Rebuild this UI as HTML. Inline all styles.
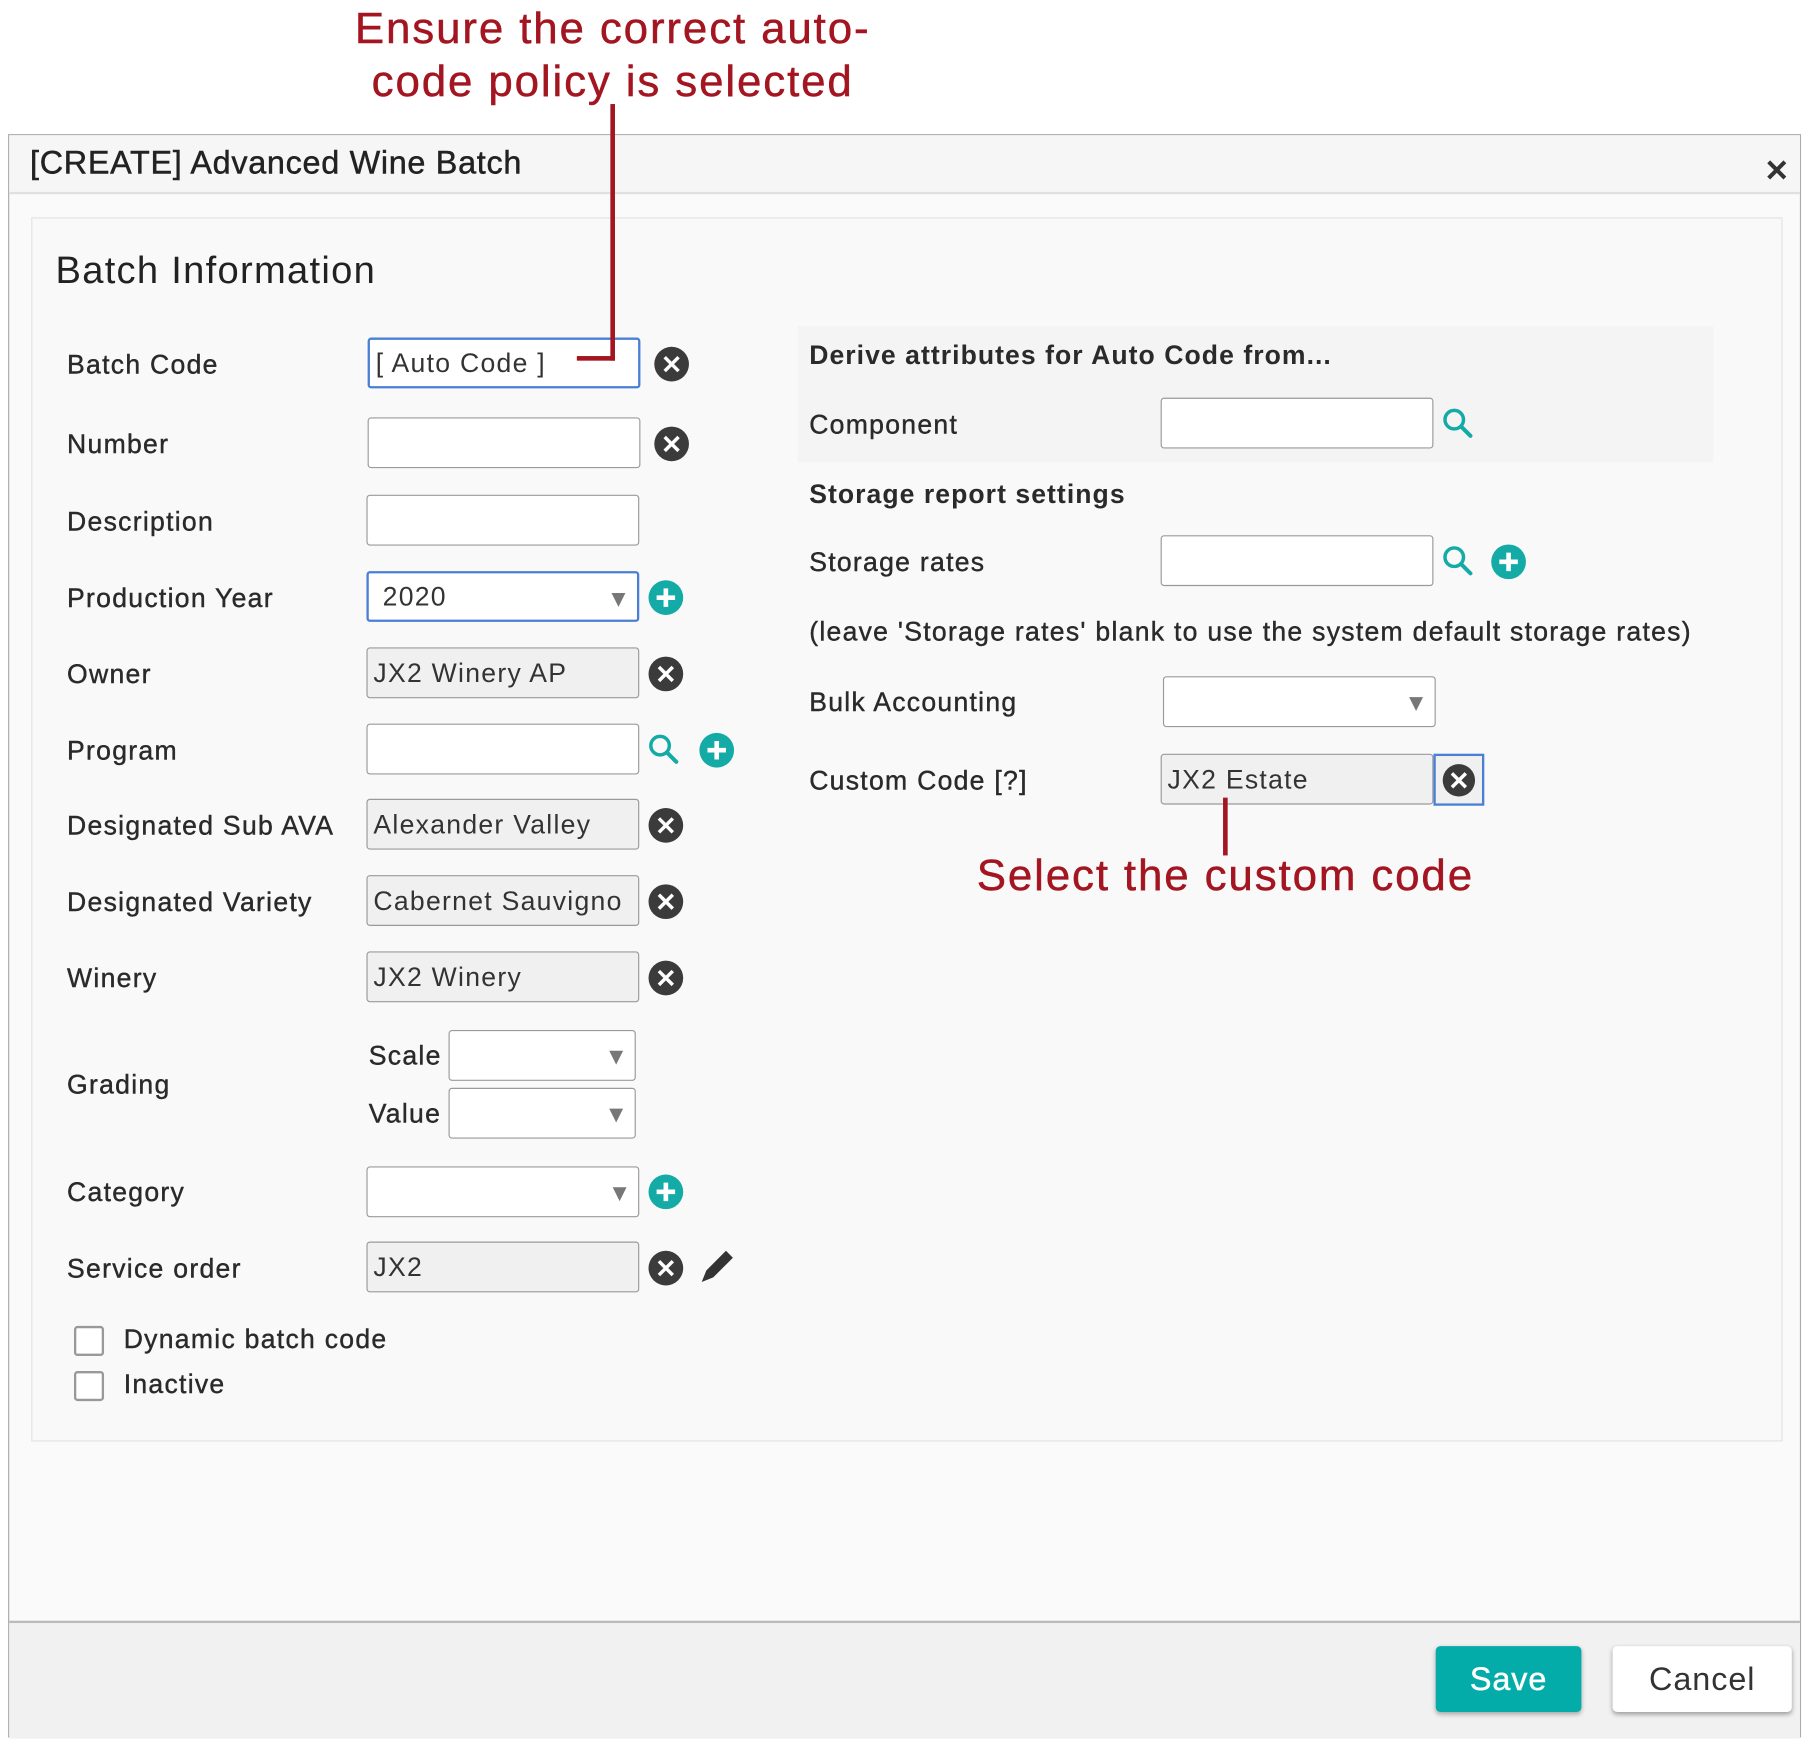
<!DOCTYPE html>
<html><head><meta charset="utf-8">
<style>
html,body{margin:0;padding:0;background:#fff;width:1812px;height:1746px;overflow:hidden}
#w{position:absolute;left:0;top:0;width:1568px;height:1510px;transform:scale(1.156);transform-origin:0 0;font-family:"Liberation Sans",sans-serif;color:#333}
.a{position:absolute}
.lbl{position:absolute;font-size:23px;letter-spacing:1.1px;color:#2a2a2a;-webkit-text-stroke:0.35px #2a2a2a;line-height:26px;transform:translateY(-13px);white-space:nowrap}
.b{font-weight:bold;letter-spacing:0.9px;-webkit-text-stroke:0}
.inp{position:absolute;width:236px;height:44px;border:1px solid #9a9a9a;border-radius:3px;background:#fff;box-sizing:border-box;font-size:23px;letter-spacing:1.1px;line-height:42px;padding-left:5px;color:#333;white-space:nowrap;overflow:hidden}
.ro{background:#f0f0f0}
.sel::after{content:"";position:absolute;right:10px;top:17px;border-left:6px solid transparent;border-right:6px solid transparent;border-top:12px solid #777}
.red{color:#a31621;font-size:38px;letter-spacing:1.6px;position:absolute;text-align:center;white-space:nowrap;-webkit-text-stroke:0.4px #a31621}
</style></head><body>
<div id="w">
<div class="red" style="left:230px;width:600px;top:2px;line-height:46px">Ensure the correct auto-<br>code policy is selected</div>

<div class="a" style="left:7px;top:116px;width:1551px;height:1387px;border:1px solid #aaa;background:#fafafa;box-sizing:border-box"></div>
<div class="a" style="left:8px;top:117px;width:1549px;height:49px;background:#f6f6f6;border-bottom:2px solid #e0e0e0"></div>
<div class="a" style="left:26px;top:125px;font-size:28px;letter-spacing:0.6px;color:#222;-webkit-text-stroke:0.4px #222">[CREATE] Advanced Wine Batch</div>
<svg class="a" style="left:1527px;top:137px" width="20" height="20"><path d="M3 3L17 17M17 3L3 17" stroke="#333" stroke-width="3.5"/></svg>
<div class="a" style="left:27px;top:188px;width:1515px;height:1059px;border:1px solid #e3e3e3;background:#f9f9f9;box-sizing:border-box"></div>
<div class="a" style="left:48px;top:215px;font-size:33px;letter-spacing:1.1px;color:#222">Batch Information</div>
<div class="a" style="left:690px;top:282px;width:792px;height:118px;background:#f4f4f4"></div>

<div class="lbl" style="left:58px;top:315px">Batch Code</div>
<div class="lbl" style="left:58px;top:384px">Number</div>
<div class="lbl" style="left:58px;top:451px">Description</div>
<div class="lbl" style="left:58px;top:517px">Production Year</div>
<div class="lbl" style="left:58px;top:583px">Owner</div>
<div class="lbl" style="left:58px;top:649px">Program</div>
<div class="lbl" style="left:58px;top:714px">Designated Sub AVA</div>
<div class="lbl" style="left:58px;top:780px">Designated Variety</div>
<div class="lbl" style="left:58px;top:846px">Winery</div>
<div class="lbl" style="left:58px;top:938px">Grading</div>
<div class="lbl" style="left:319px;top:913px">Scale</div>
<div class="lbl" style="left:319px;top:963px">Value</div>
<div class="lbl" style="left:58px;top:1031px">Category</div>
<div class="lbl" style="left:58px;top:1097px">Service order</div>
<div class="a" style="left:64px;top:1147px;width:22px;height:22px;border:2px solid #999;border-radius:3px;background:#fff"></div>
<div class="lbl" style="left:107px;top:1158px">Dynamic batch code</div>
<div class="a" style="left:64px;top:1186px;width:22px;height:22px;border:2px solid #999;border-radius:3px;background:#fff"></div>
<div class="lbl" style="left:107px;top:1197px">Inactive</div>

<div class="inp" style="left:318px;top:292px;border:2px solid #4a7fd6;line-height:40px">[ Auto Code ]</div>
<div class="inp" style="left:318px;top:361px"></div>
<div class="inp" style="left:317px;top:428px"></div>
<div class="inp sel" style="left:317px;top:494px;border:2px solid #4a7fd6;padding-left:12px;line-height:40px">2020</div>
<div class="inp ro" style="left:317px;top:560px">JX2 Winery AP</div>
<div class="inp" style="left:317px;top:626px"></div>
<div class="inp ro" style="left:317px;top:691px">Alexander Valley</div>
<div class="inp ro" style="left:317px;top:757px">Cabernet Sauvigno</div>
<div class="inp ro" style="left:317px;top:823px">JX2 Winery</div>
<div class="inp sel" style="left:388px;top:891px;width:162px"></div>
<div class="inp sel" style="left:388px;top:941px;width:162px"></div>
<div class="inp sel" style="left:317px;top:1009px"></div>
<div class="inp ro" style="left:317px;top:1074px">JX2</div>

<div class="a" style="left:528px;top:90px;width:4px;height:222px;background:#a31621"></div>
<div class="a" style="left:499px;top:308px;width:33px;height:4px;background:#a31621"></div>

<div class="lbl b" style="left:700px;top:307px">Derive attributes for Auto Code from...</div>
<div class="lbl" style="left:700px;top:367px">Component</div>
<div class="inp" style="left:1004px;top:344px"></div>
<div class="lbl b" style="left:700px;top:427px">Storage report settings</div>
<div class="lbl" style="left:700px;top:486px">Storage rates</div>
<div class="inp" style="left:1004px;top:463px"></div>
<div class="lbl" style="left:700px;top:546px">(leave 'Storage rates' blank to use the system default storage rates)</div>
<div class="lbl" style="left:700px;top:607px">Bulk Accounting</div>
<div class="inp sel" style="left:1006px;top:585px"></div>
<div class="lbl" style="left:700px;top:675px">Custom Code [?]</div>
<div class="inp ro" style="left:1004px;top:652px">JX2 Estate</div>
<div class="a" style="left:1240px;top:652px;width:44px;height:45px;border:2px solid #4a7fd6;box-sizing:border-box;background:#f0f0f0"></div>
<svg class="a" style="left:1247px;top:660px" width="30" height="30"><circle cx="15" cy="15" r="14" fill="#3b3b3b"/><path d="M9 9L21 21M21 9L9 21" stroke="#fff" stroke-width="3"/></svg>
<div class="a" style="left:1058px;top:690px;width:4px;height:50px;background:#a31621"></div>
<div class="red" style="left:760px;width:600px;top:735px;line-height:46px">Select the custom code</div>

<svg class="a" style="left:0;top:0;overflow:visible" width="1562" height="1505">
<defs>
<g id="x"><circle r="15" fill="#3b3b3b"/><path d="M-6-6L6 6M6-6L-6 6" stroke="#fff" stroke-width="3"/></g>
<g id="p"><circle r="15" fill="#14aaa6"/><path d="M-8 0H8M0-8V8" stroke="#fff" stroke-width="4"/></g>
<g id="s"><circle cx="-3" cy="-3" r="8" fill="none" stroke="#14aaa6" stroke-width="3"/><path d="M3 3L11 11" stroke="#14aaa6" stroke-width="3.5" stroke-linecap="round"/></g>
</defs>
<use href="#x" x="581" y="315"/><use href="#x" x="581" y="384"/>
<use href="#p" x="576" y="517"/>
<use href="#x" x="576" y="583"/>
<use href="#s" x="574" y="648"/><use href="#p" x="620" y="649"/>
<use href="#x" x="576" y="714"/><use href="#x" x="576" y="780"/><use href="#x" x="576" y="846"/>
<use href="#p" x="576" y="1031"/>
<use href="#x" x="576" y="1097"/>
<path d="M607 1109L611 1099L628 1082L634 1088L617 1105Z" fill="#333"/>
<use href="#s" x="1261" y="366"/>
<use href="#s" x="1261" y="485"/><use href="#p" x="1305" y="486"/>
</svg>

<div class="a" style="left:8px;top:1402px;width:1549px;height:100px;background:#f1f1f1;border-top:2px solid #bbb"></div>
<div class="a" style="left:1242px;top:1424px;width:126px;height:57px;background:#03aca8;border-radius:4px;box-shadow:0 2px 4px rgba(0,0,0,.3);color:#fff;font-size:28px;letter-spacing:0.8px;line-height:57px;text-align:center;-webkit-text-stroke:0.4px #fff">Save</div>
<div class="a" style="left:1395px;top:1424px;width:155px;height:57px;background:#fff;border-radius:4px;box-shadow:0 2px 4px rgba(0,0,0,.35);color:#333;font-size:28px;letter-spacing:0.8px;line-height:57px;text-align:center">Cancel</div>
</div>
</body></html>
